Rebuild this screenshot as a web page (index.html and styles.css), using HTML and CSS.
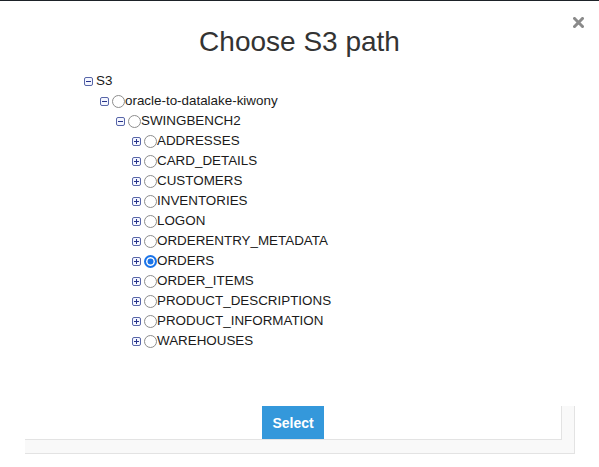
FILE: index.html
```html
<!DOCTYPE html>
<html>
<head>
<meta charset="utf-8">
<link rel="stylesheet" href="styles.css">
</head>
<body>
<div class="modal">
  <div class="close" aria-label="close">
    <svg width="11" height="11" viewBox="0 0 11 11"><path d="M1.5 1.5 L9.5 9.5 M9.5 1.5 L1.5 9.5" stroke="#8a8a8a" stroke-width="3" stroke-linecap="square"/></svg>
  </div>
  <h1 class="title">Choose S3 path</h1>
  <div class="tree">
    <div class="row lvl0"><span class="tog minus"></span><span class="label">S3</span></div>
    <div class="row lvl1"><span class="tog minus"></span><span class="radio"></span><span class="label">oracle-to-datalake-kiwony</span></div>
    <div class="row lvl2"><span class="tog minus"></span><span class="radio"></span><span class="label">SWINGBENCH2</span></div>
    <div class="row lvl3"><span class="tog plus"></span><span class="radio"></span><span class="label">ADDRESSES</span></div>
    <div class="row lvl3"><span class="tog plus"></span><span class="radio"></span><span class="label">CARD_DETAILS</span></div>
    <div class="row lvl3"><span class="tog plus"></span><span class="radio"></span><span class="label">CUSTOMERS</span></div>
    <div class="row lvl3"><span class="tog plus"></span><span class="radio"></span><span class="label">INVENTORIES</span></div>
    <div class="row lvl3"><span class="tog plus"></span><span class="radio"></span><span class="label">LOGON</span></div>
    <div class="row lvl3"><span class="tog plus"></span><span class="radio"></span><span class="label">ORDERENTRY_METADATA</span></div>
    <div class="row lvl3"><span class="tog plus"></span><span class="radio checked"></span><span class="label">ORDERS</span></div>
    <div class="row lvl3"><span class="tog plus"></span><span class="radio"></span><span class="label">ORDER_ITEMS</span></div>
    <div class="row lvl3"><span class="tog plus"></span><span class="radio"></span><span class="label">PRODUCT_DESCRIPTIONS</span></div>
    <div class="row lvl3"><span class="tog plus"></span><span class="radio"></span><span class="label">PRODUCT_INFORMATION</span></div>
    <div class="row lvl3"><span class="tog plus"></span><span class="radio"></span><span class="label">WAREHOUSES</span></div>
  </div>
  <div class="footer">
    <div class="footer-inner">
      <button class="select">Select</button>
    </div>
  </div>
</div>
</body>
</html>
```

FILE: styles.css
```css
html, body {
  margin: 0;
  padding: 0;
  background: #ffffff;
}
body {
  font-family: "Liberation Sans", Arial, Helvetica, sans-serif;
  color: #222;
  width: 599px;
  height: 467px;
  overflow: hidden;
}
.modal {
  position: relative;
  border-top: 1px solid #1d2228;
  height: 466px;
  box-sizing: border-box;
}
.close {
  position: absolute;
  right: 15px;
  top: 16px;
  width: 11px;
  height: 11px;
  line-height: 0;
}
.title {
  margin: 0;
  padding-top: 24px;
  font-size: 28px;
  font-weight: normal;
  line-height: 34px;
  text-align: center;
  color: #333;
}
.tree {
  margin-top: 12px;
  padding-left: 84px;
  display: flex;
  flex-direction: column;
}
.row {
  height: 20px;
  display: flex;
  align-items: center;
  font-size: 13.4px;
  color: #1a1a1a;
}
.lvl1 { padding-left: 16px; }
.lvl2 { padding-left: 32px; }
.lvl3 { padding-left: 48px; }
.tog {
  width: 9px;
  height: 9px;
  box-sizing: border-box;
  border: 1px solid #5866a8;
  border-radius: 2px;
  background: #f4f6ff;
  position: relative;
  margin-right: 3px;
  flex: none;
}
.tog::before {
  content: "";
  position: absolute;
  left: 1px;
  top: 3px;
  width: 5px;
  height: 1px;
  background: #28348a;
}
.tog.plus::after {
  content: "";
  position: absolute;
  left: 3px;
  top: 1px;
  width: 1px;
  height: 5px;
  background: #28348a;
}
.radio {
  width: 13px;
  height: 13px;
  box-sizing: border-box;
  border: 1px solid #8d8d8d;
  border-radius: 50%;
  background: #fff;
  margin-right: 0;
  flex: none;
}
.radio.checked {
  border: 2px solid #1a73e8;
  background: #fff;
  box-shadow: inset 0 0 0 1.5px #fff, inset 0 0 0 6px #1a73e8;
}
.label {
  line-height: 20px;
  white-space: nowrap;
}
.footer {
  position: absolute;
  left: 25px;
  top: 405px;
  width: 550px;
  height: 48px;
  box-sizing: border-box;
  background: #f9f9f9;
  border-right: 1px solid #e3e3e3;
  border-bottom: 1px solid #e3e3e3;
}
.footer-inner {
  width: 537px;
  height: 34px;
  box-sizing: border-box;
  background: #fff;
  border-right: 1px solid #e3e3e3;
  border-bottom: 1px solid #e3e3e3;
  display: flex;
  justify-content: center;
  align-items: flex-start;
}
.select {
  width: 62px;
  height: 33px;
  border: none;
  border-radius: 0;
  background: #3498db;
  color: #fff;
  font-family: "Liberation Sans", Arial, Helvetica, sans-serif;
  font-size: 14px;
  font-weight: bold;
  padding: 1px 0 0 0;
  margin: 0;
}
```
